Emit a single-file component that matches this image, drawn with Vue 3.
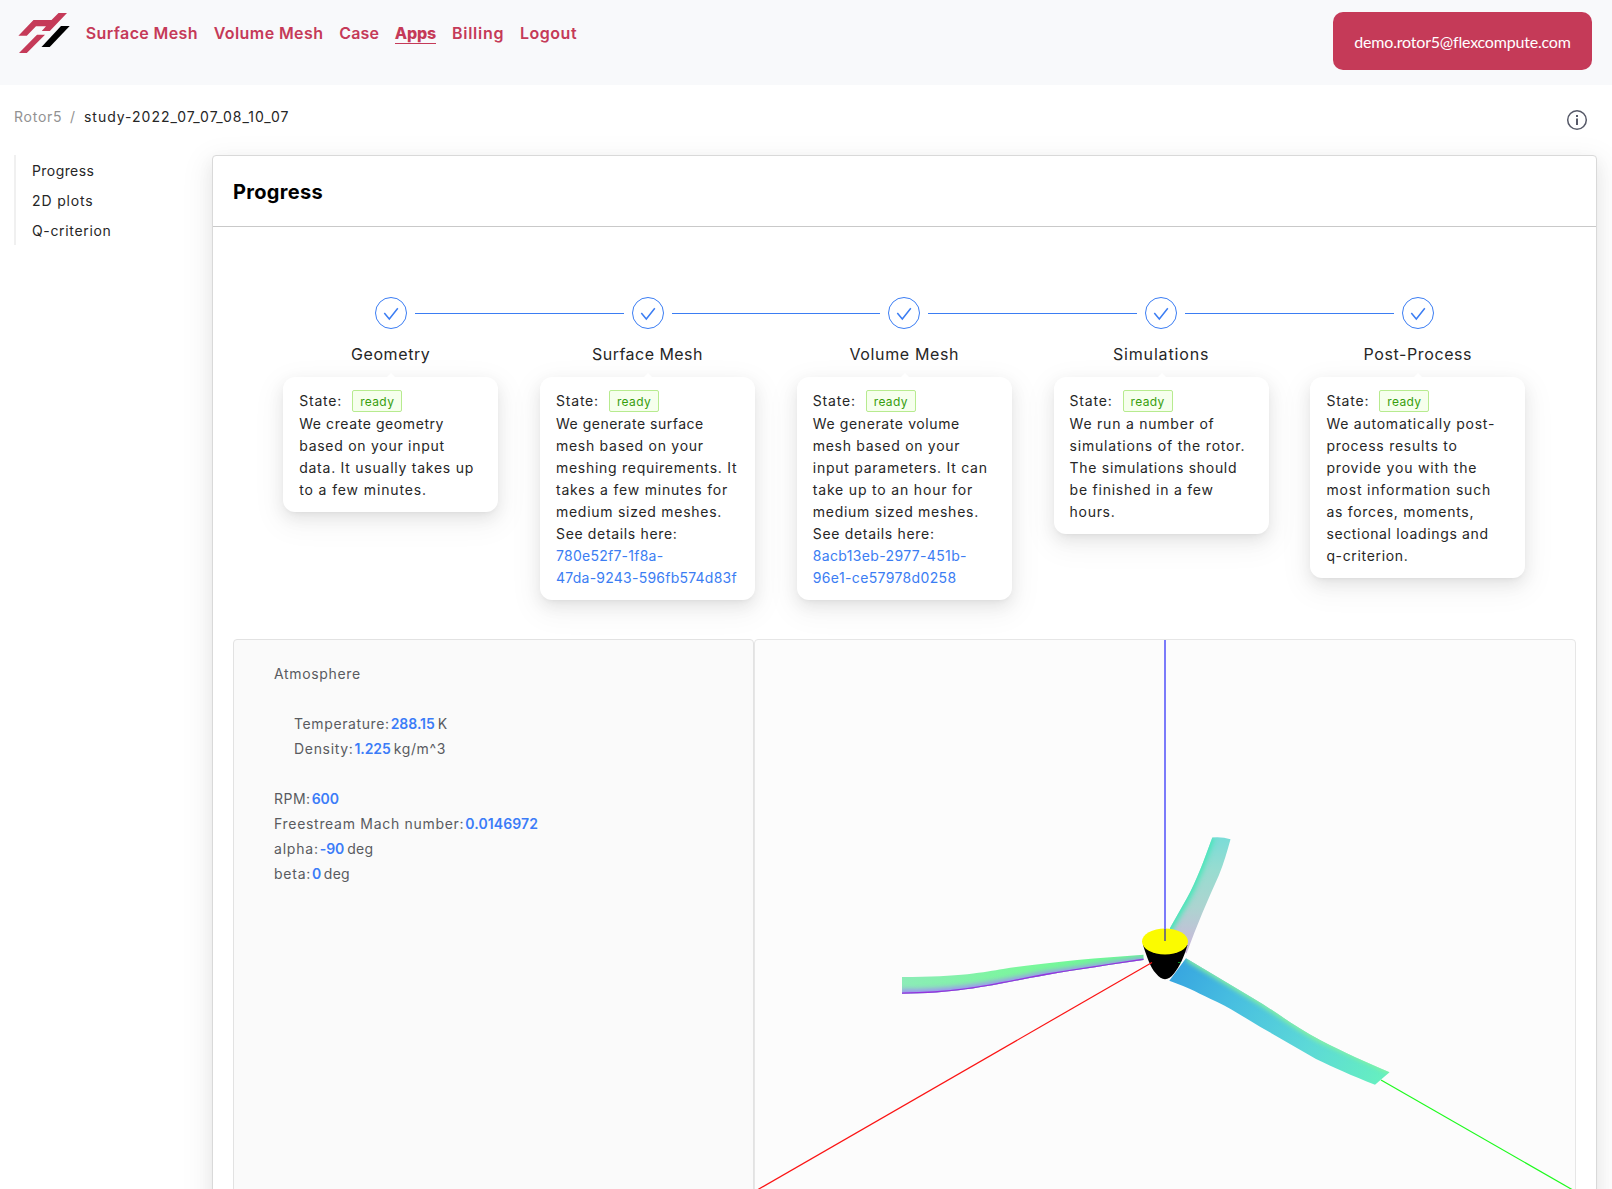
<script setup>
// Every label is stored as [text, tracking in px]
const nav = [
  { t: ['Surface Mesh', 0.38] },
  { t: ['Volume Mesh', 0.41] },
  { t: ['Case', 0.15] },
  { t: ['Apps', -0.15], active: true },
  { t: ['Billing', 0.75] },
  { t: ['Logout', 0.5] },
]
const anchors = [['Progress', 0.42], ['2D plots', 0.85], ['Q-criterion', 0.66]]
const steps = [
  {
    title: ['Geometry', 0.61],
    lines: [['We create geometry', 0.58], ['based on your input', 0.73], ['data. It usually takes up', 0.75], ['to a few minutes.', 0.88]],
  },
  {
    title: ['Surface Mesh', 0.47],
    lines: [['We generate surface', 0.5], ['mesh based on your', 0.72], ['meshing requirements. It', 0.72], ['takes a few minutes for', 0.79], ['medium sized meshes.', 0.73], ['See details here:', 0.66]],
    link: [['780e52f7-1f8a-', 0.26], ['47da-9243-596fb574d83f', 0.24]],
  },
  {
    title: ['Volume Mesh', 0.63],
    lines: [['We generate volume', 0.61], ['mesh based on your', 0.7], ['input parameters. It can', 0.74], ['take up to an hour for', 0.82], ['medium sized meshes.', 0.73], ['See details here:', 0.68]],
    link: [['8acb13eb-2977-451b-', 0.35], ['96e1-ce57978d0258', 0.36]],
  },
  {
    title: ['Simulations', 0.84],
    lines: [['We run a number of', 0.77], ['simulations of the rotor.', 0.8], ['The simulations should', 0.7], ['be finished in a few', 0.77], ['hours.', 0.7]],
  },
  {
    title: ['Post-Process', 0.6],
    lines: [['We automatically post-', 0.76], ['process results to', 0.74], ['provide you with the', 0.82], ['most information such', 0.82], ['as forces, moments,', 0.72], ['sectional loadings and', 0.65], ['q-criterion.', 0.66]],
  },
]
const atmosphere = [
  { k: ['Temperature:', 0.61], v: ['288.15', -0.03], u: ['K', 0] },
  { k: ['Density:', 0.68], v: ['1.225', -0.1], u: ['kg/m^3', 0.65] },
]
const flight = [
  { k: ['RPM:', 0.5], v: ['600', -0.1] },
  { k: ['Freestream Mach number:', 0.7], v: ['0.0146972', 0.11] },
  { k: ['alpha:', 0.8], v: ['-90', -0.1], u: ['deg', 0.28] },
  { k: ['beta:', 0.75], v: ['0', -0.5], u: ['deg', 0.28] },
]
const track = (t) => ({ letterSpacing: t[1] + 'px' })
</script>

<template>
  <div class="page">
    <header class="top">
      <svg class="logo" width="52" height="42" viewBox="0 0 52 42">
        <path fill="#c53a58" d="M.4 23.800 15.500 8H33.500L40.500 1H49L31.800 19H23.800L28 14.200H18L8.800 23.800ZM19 22.800H27L8.800 41H1Z" />
        <path fill="#000" d="M43 14H51.700L31.700 35H23.500Z" />
      </svg>
      <nav class="nav">
        <a v-for="n in nav" :key="n.t[0]" :class="{ active: n.active }" :style="track(n.t)">{{ n.t[0] }}</a>
      </nav>
      <button class="user">demo.rotor5@flexcompute.com</button>
    </header>

    <div class="crumbs">
      <span class="muted root">Rotor5</span>
      <span class="muted sep">/</span>
      <span class="study">study-2022_07_07_08_10_07</span>
      <svg class="info" width="22" height="22" viewBox="0 0 22 22">
        <circle cx="11" cy="11" r="9.300" fill="none" stroke="#565968" stroke-width="1.500" />
        <path d="M10 6h2v2h-2zM10 9.500h2V16h-2z" fill="#565968" />
      </svg>
    </div>

    <div class="main">
      <aside class="anchors">
        <a v-for="a in anchors" :key="a[0]" :style="track(a)">{{ a[0] }}</a>
      </aside>

      <section class="card">
        <h2>Progress</h2>
        <div class="steps">
          <div v-for="s in steps" :key="s.title[0]" class="step">
            <div class="rail">
              <i class="line"></i>
              <svg class="dot" width="32" height="32" viewBox="0 0 32 32">
                <circle cx="16" cy="16" r="15.500" fill="#fff" stroke="#3b7df3" />
                <path d="M9.300 16 14.300 22 22.800 11.300" fill="none" stroke="#3b7df3" stroke-width="1.500" />
              </svg>
              <i class="line"></i>
            </div>
            <div class="title" :style="track(s.title)">{{ s.title[0] }}</div>
            <div class="pop">
              <div class="state"><span class="lbl">State:</span><span class="tag">ready</span></div>
              <div v-for="l in s.lines" :key="l[0]" class="row" :style="track(l)">{{ l[0] }}</div>
              <a v-for="l in s.link || []" :key="l[0]" class="row link" :style="track(l)">{{ l[0] }}</a>
            </div>
          </div>
        </div>

        <div class="panels">
          <div class="params">
            <div class="param head">Atmosphere</div>
            <div class="group">
              <div v-for="p in atmosphere" :key="p.k[0]" class="param">
                <span :style="track(p.k)">{{ p.k[0] }}</span><b :style="track(p.v)">{{ p.v[0] }}</b><span :style="track(p.u)">{{ p.u[0] }}</span>
              </div>
            </div>
            <div v-for="p in flight" :key="p.k[0]" class="param">
              <span :style="track(p.k)">{{ p.k[0] }}</span><b :style="track(p.v)">{{ p.v[0] }}</b><span v-if="p.u" :style="track(p.u)">{{ p.u[0] }}</span>
            </div>
          </div>
          <div class="viewer">
            <svg width="819" height="549" viewBox="755 640 819 549">
              <defs>
                <linearGradient id="gLeft" x1="0" x2="1" y1="0" y2="0">
                  <stop offset="0" stop-color="#8cecb8" /><stop offset=".5" stop-color="#7af79c" /><stop offset="1" stop-color="#68f894" />
                </linearGradient>
                <linearGradient id="gRight" gradientUnits="userSpaceOnUse" x1="1172" y1="965" x2="1382" y2="1080">
                  <stop offset="0" stop-color="#36a4e0" /><stop offset=".3" stop-color="#48bfe0" /><stop offset=".65" stop-color="#5cd8d8" /><stop offset="1" stop-color="#66efc0" />
                </linearGradient>
                <linearGradient id="gTop" x1="0" x2="0" y1="0" y2="1">
                  <stop offset="0" stop-color="#78dcd8" /><stop offset=".3" stop-color="#98dcd0" /><stop offset=".6" stop-color="#acd4d0" /><stop offset="1" stop-color="#d0b4dc" />
                </linearGradient>
                <filter id="soft" x="-20%" y="-50%" width="140%" height="200%" color-interpolation-filters="sRGB"><feGaussianBlur stdDeviation="2.500" /></filter>
                <clipPath id="cLeft"><path d="M902 977C960 977 985 972 1003 969C1040 963 1095 958 1143.500 954.700V960C1110 965 1080 969 1046.700 975C1000 983 965 993.500 902 993.700Z" /></clipPath>
                <clipPath id="cRight"><path d="M1186 958.300 1253 998.300C1275 1011 1295 1027 1320 1040C1345 1053 1366 1062 1389.500 1072.300L1375 1084.700C1350 1075 1335 1068 1316 1059L1260 1026.700C1245 1018 1232 1009 1216.700 1001.700C1200 994 1190 988 1169.300 980.700Z" /></clipPath>
                <clipPath id="cTop"><path d="M1212.300 837.500Q1222 836.500 1230.500 839.300C1227 852 1224 863 1219 875C1208 899 1197 925 1186.500 953.500L1170 940V928L1187 898C1196 882 1205 858 1212.300 837.500Z" /></clipPath>
              </defs>
              <line x1="1572" y1="1189.500" x2="1381" y2="1080" stroke="#1dfa1d" stroke-width="1.200" />
              <g clip-path="url(#cTop)">
                <rect x="1165" y="835" width="70" height="120" fill="url(#gTop)" />
                <path d="M1163 938 1185 899C1195 880 1203 858 1210 837" fill="none" stroke="#44e8b8" stroke-width="9" filter="url(#soft)" />
              </g>
              <g clip-path="url(#cRight)">
                <rect x="1165" y="950" width="230" height="140" fill="url(#gRight)" />
                <path d="M1188 957 1255 997C1277 1010 1297 1026 1322 1039L1392 1070" fill="none" stroke="#8cf49c" stroke-width="8" filter="url(#soft)" />
              </g>
              <g clip-path="url(#cLeft)">
                <rect x="900" y="950" width="246" height="46" fill="url(#gLeft)" />
                <path d="M900 994C965 994 1000 984 1047 976L1144 962" fill="none" stroke="#a08cf8" stroke-width="9" filter="url(#soft)" />
                <path d="M900 993.500C965 993.500 1000 983 1046.700 974.500L1144 959.500" fill="none" stroke="#9434dc" stroke-width="2" />
              </g>
              <path d="M1143 945C1147 957 1150 967 1156 973.500C1162 981 1168 981 1174 973.500C1180 966 1184 957 1187.500 945Z" fill="#000" />
              <ellipse cx="1165" cy="941.500" rx="23" ry="13" fill="#fbfb00" />
              <path d="M1178 962.500h3" stroke="#0a8f20" />
              <line x1="758" y1="1189.500" x2="1152" y2="962.500" stroke="#fb1414" stroke-width="1.200" />
              <rect x="1164" y="640" width="2" height="289" fill="#7b7bfa" />
              <rect x="1164" y="929" width="2" height="12" fill="#7c7c68" />
            </svg>
          </div>
        </div>
      </section>
    </div>
  </div>
</template>

<style>
body { background: #fff; }
</style>
<style scoped>
.page { height: 1189px; overflow: hidden; display: flex; flex-direction: column; font: 14px/22px Inter, sans-serif; color: #262626; box-sizing: border-box; }
.top { flex: none; height: 85px; background: #f8f9fb; display: flex; align-items: flex-start; padding: 0 20px 0 18px; box-sizing: border-box; }
.logo { margin-top: 12px; }
.nav { display: flex; gap: 15.8px; margin: 23px 0 0 15.8px; flex: 1; }
.nav a { color: #c53a58; font-size: 16px; line-height: 21px; height: 20px; font-weight: 600; border-bottom: 1px solid transparent; }
.nav a.active { font-weight: 800; border-color: #c53a58; }
.user { margin-top: 12px; width: 259px; height: 58px; border: 0; border-radius: 10px; background: #c53a58; color: #fff; font: 400 16px/24px Lato, sans-serif; letter-spacing: -.2px; padding: 2px 0 0; white-space: nowrap; }
.crumbs { display: flex; padding: 21px 24px 0 14px; height: 49px; flex: none; }
.muted { color: #929292; }
.root { letter-spacing: .75px; width: 56px; }
.sep { width: 14px; }
.study { letter-spacing: .98px; flex: 1; }
.info { margin-top: 3px; }
.main { display: flex; flex: 1; padding: 0 15px 0 14px; }
.anchors { width: 196px; height: 90px; border-left: 2px solid #f0f0f0; padding: 1px 0 0 16px; box-sizing: border-box; display: flex; flex-direction: column; margin-right: 2px; }
.anchors a { line-height: 30px; }
.card { flex: 1; height: 1100px; border: 1px solid #d9d9d9; border-radius: 4px; background: #fff; box-sizing: border-box; box-shadow: 0 9px 28px 8px rgba(0,0,0,.05), 0 6px 16px rgba(0,0,0,.06); }
h2 { margin: 0; height: 70px; border-bottom: 1px solid #c9c9c9; padding-left: 20px; font-size: 20px; line-height: 72px; font-weight: 700; color: #000; letter-spacing: .3px; }
.steps { display: flex; width: 1284px; height: 412px; margin: 0 0 0 49.3px; padding-top: 70px; box-sizing: border-box; }
.step { width: 256.8px; display: flex; flex-direction: column; align-items: center; }
.rail { display: flex; align-items: center; gap: 8px; align-self: stretch; }
.line { flex: 1; height: 1px; background: #3b7df3; }
.step:first-child .line:first-child, .step:last-child .line:last-child { background: transparent; }
.title { margin-top: 13px; font-size: 16px; line-height: 24px; }
.pop { position: relative; margin-top: 11px; width: 215px; padding: 13px 0 11px 16px; box-sizing: border-box; border-radius: 12px; background: #fff; white-space: nowrap; box-shadow: 0 9px 28px 8px rgba(0,0,0,.04), 0 6px 16px rgba(0,0,0,.08), 0 3px 6px -4px rgba(0,0,0,.1); }
.pop::before { content: ""; position: absolute; left: 104px; top: -4px; border: 4px solid transparent; border-top: 0; border-bottom-color: #fff; }
.state { display: flex; height: 23px; }
.lbl { width: 53px; letter-spacing: .8px; }
.tag { width: 50px; height: 22px; box-sizing: border-box; border: 1px solid #b7eb8f; border-radius: 2px; background: #f6ffed; color: #389e0d; font-size: 12px; line-height: 21px; text-align: center; letter-spacing: .36px; }
.row { display: block; }
.link { color: #3b7df3; }
.panels { display: flex; height: 600px; margin: 0 20px; }
.params { width: 521px; box-sizing: border-box; border: 1px solid #e2e2e2; border-radius: 4px 4px 0 0; background: #fafafa; padding: 21px 0 0 40px; color: #595b60; }
.param { height: 25px; line-height: 25px; display: flex; gap: 2px; }
.param b { font-weight: 600; color: #3b7cf8; margin-left: -1px; margin-right: 1px; }
.head { letter-spacing: .66px; margin-bottom: 25px; }
.group { padding-left: 20px; margin-bottom: 25px; }
.viewer { flex: 1; border: 1px solid #e6e6e6; border-radius: 4px 4px 0 0; background: #fcfcfc; overflow: hidden; }
.viewer svg { display: block; }
</style>
